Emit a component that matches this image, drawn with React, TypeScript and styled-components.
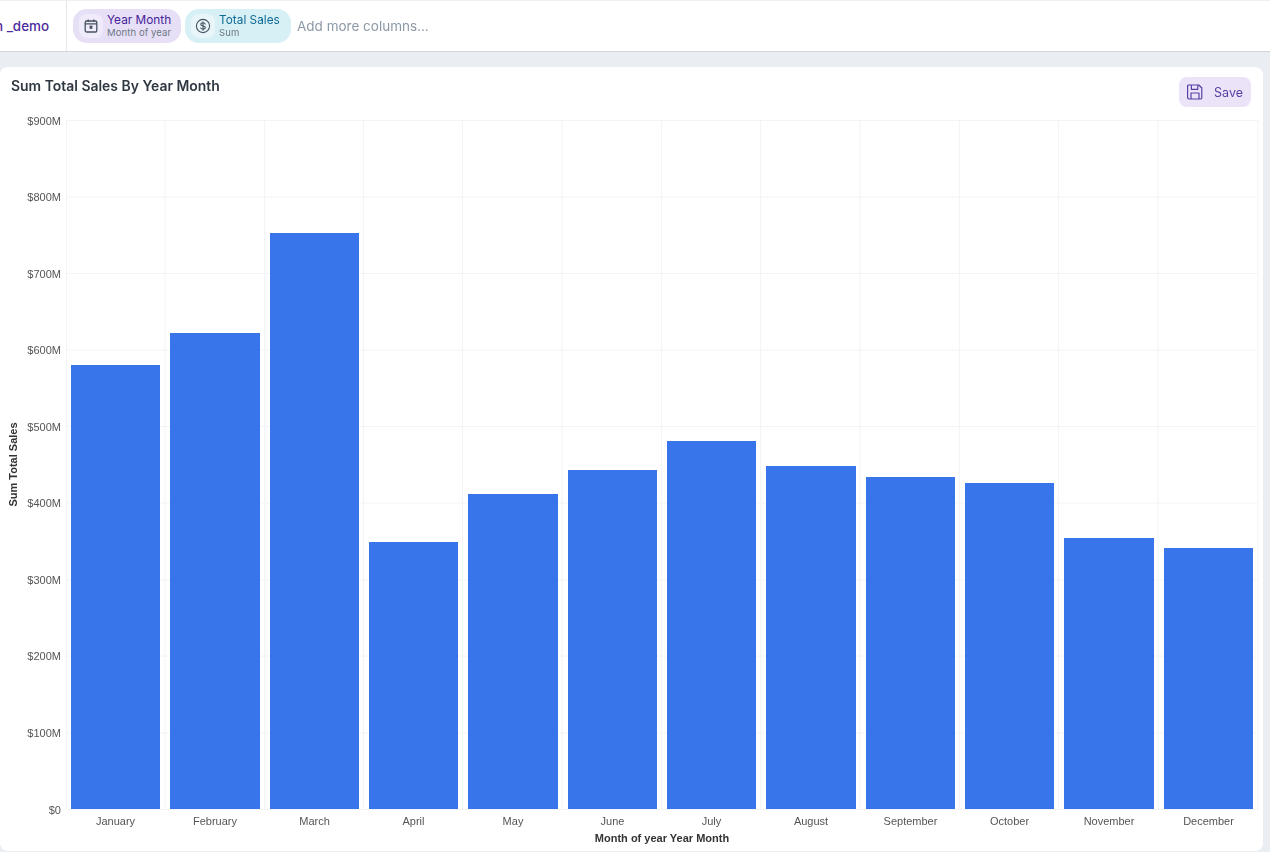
import React from "react";
import styled, { createGlobalStyle } from "styled-components";

const Global = createGlobalStyle`
  html, body { margin: 0; padding: 0; height: 100%; overflow: hidden; }
  body { background: #eaeef2; font-family: Inter, "Noto Sans", sans-serif; }
  #root { height: 852px; }
`;

const Page = styled.div`
  width: 1270px;
  height: 852px;
  display: flex;
  flex-direction: column;
  overflow: hidden;
  will-change: opacity;
`;

const TopBar = styled.header`
  height: 52px;
  flex: none;
  box-sizing: border-box;
  display: flex;
  align-items: center;
  background: #fff;
  border-top: 1px solid #eef1f4;
  border-bottom: 1px solid #d1d6db;
`;

const Source = styled.div`
  width: 67px;
  height: 100%;
  box-sizing: border-box;
  flex: none;
  display: flex;
  align-items: center;
  justify-content: flex-end;
  padding: 0 17px 1px 0;
  overflow: hidden;
  white-space: nowrap;
  border-right: 1px solid #e3e7ea;
  color: #4c2a9e;
  font-size: 13.4px;
  font-weight: 500;
`;

const Columns = styled.div`
  display: flex;
  align-items: center;
  gap: 4px;
  padding-left: 6px;
`;

const Chip = styled.div<{ $tone: "purple" | "cyan"; $w: number }>`
  width: ${(p) => p.$w}px;
  height: 34px;
  box-sizing: border-box;
  padding-left: 6px;
  display: flex;
  align-items: center;
  gap: 4px;
  border-radius: 14px;
  background: ${(p) => (p.$tone === "purple" ? "#e7dff6" : "#d6f0f6")};
`;

const ChipIcon = styled.span<{ $tone: "purple" | "cyan" }>`
  width: 24px;
  height: 24px;
  flex: none;
  display: flex;
  align-items: center;
  justify-content: center;
  border-radius: 8px;
  background: ${(p) => (p.$tone === "purple" ? "#f0ebfa" : "#e8f6fa")};
  color: #46525f;
`;

const ChipText = styled.div`
  display: flex;
  flex-direction: column;
  white-space: nowrap;
`;

const ChipTitle = styled.span<{ $tone: "purple" | "cyan" }>`
  font-size: 11.8px;
  line-height: 14px;
  font-weight: 400;
  letter-spacing: 0.02px;
  color: ${(p) => (p.$tone === "purple" ? "#44229a" : "#0f6a94")};
`;

const ChipSub = styled.span`
  font-size: 9.5px;
  line-height: 12px;
  letter-spacing: 0.1px;
  color: #6d7884;
`;

const Placeholder = styled.span`
  margin: 0 0 1px 2px;
  font-size: 13.5px;
  line-height: 18px;
  color: #8c98a6;
`;

const Card = styled.section`
  margin-top: 15px;
  width: 1263px;
  height: 784px;
  flex: none;
  display: flex;
  flex-direction: column;
  background: #fff;
  border-radius: 8px;
  overflow: hidden;
`;

const CardHeader = styled.div`
  height: 48px;
  flex: none;
  box-sizing: border-box;
  padding: 10px 12px 0 11px;
  display: flex;
  justify-content: space-between;
  align-items: flex-start;
`;

const CardTitle = styled.h2`
  margin: -1px 0 0;
  font-size: 13.95px;
  line-height: 20px;
  font-weight: 600;
  color: #2f3741;
`;

const SaveButton = styled.button`
  width: 72px;
  height: 30px;
  box-sizing: border-box;
  padding: 0 8px;
  border: 0;
  border-radius: 8px;
  background: #ebe4f8;
  color: #5a3ea6;
  display: flex;
  align-items: center;
  justify-content: space-between;
  font-family: inherit;
  font-size: 12.5px;
`;

const Chart = styled.svg`
  display: block;
  flex: none;
  font-family: "Liberation Sans", Arial, sans-serif;
`;

const AxisText = styled.text`
  font-size: 11px;
  fill: #555;
`;

const AxisTitle = styled.text`
  font-size: 11px;
  font-weight: 700;
  fill: #333;
`;

const months: [string, number, number, number][] = [
  ["January", 71, 160, 365],
  ["February", 170, 260, 333],
  ["March", 270, 359, 233],
  ["April", 369, 458, 542],
  ["May", 468, 558, 494],
  ["June", 568, 657, 470],
  ["July", 667, 756, 441],
  ["August", 766, 856, 466],
  ["September", 866, 955, 477],
  ["October", 965, 1054, 483],
  ["November", 1064, 1154, 538],
  ["December", 1164, 1253, 548],
];
const ticks: [string, number][] = [
  ["$900M", 120.5], ["$800M", 197], ["$700M", 273.5], ["$600M", 350], ["$500M", 426.5],
  ["$400M", 503], ["$300M", 580], ["$200M", 656], ["$100M", 733], ["$0", 809.5],
];
const vLines = [66.5, 165, 264.5, 363.5, 462.5, 562, 661.5, 760.5, 860, 959.5, 1058.5, 1158, 1258];
const BASE = 809;

export default function App() {
  return (
    <Page>
      <Global />
      <TopBar>
        <Source>n _demo</Source>
        <Columns>
          <Chip $tone="purple" $w={108}>
            <ChipIcon $tone="purple">
              <svg width="14" height="14" viewBox="0 0 14 14" fill="none" stroke="currentColor" strokeWidth="1.3">
                <rect x="1.2" y="2" width="11.6" height="11" rx="1.6" />
                <path d="M1.2 4.8h11.6M4.2 0.4v2.6M9.8 0.4v2.6" />
                <rect x="5.6" y="6.6" width="2.8" height="3.2" fill="currentColor" stroke="none" />
              </svg>
            </ChipIcon>
            <ChipText>
              <ChipTitle $tone="purple">Year Month</ChipTitle>
              <ChipSub>Month of year</ChipSub>
            </ChipText>
          </Chip>
          <Chip $tone="cyan" $w={106}>
            <ChipIcon $tone="cyan">
              <svg width="16" height="16" viewBox="0 0 16 16" fill="none" stroke="currentColor" strokeWidth="1.1" strokeLinecap="round">
                <circle cx="8" cy="8" r="6.6" />
                <path d="M10.2 6.1c-.3-.8-1.1-1.3-2.2-1.3-1.3 0-2.2.7-2.2 1.6 0 2.2 4.5 1 4.5 3.2 0 .9-1 1.6-2.3 1.6-1.1 0-2-.5-2.3-1.3M8 3.8v8.4" />
              </svg>
            </ChipIcon>
            <ChipText>
              <ChipTitle $tone="cyan">Total Sales</ChipTitle>
              <ChipSub>Sum</ChipSub>
            </ChipText>
          </Chip>
          <Placeholder>Add more columns...</Placeholder>
        </Columns>
      </TopBar>
      <Card>
        <CardHeader>
          <CardTitle>Sum Total Sales By Year Month</CardTitle>
          <SaveButton>
            <svg width="16" height="16" viewBox="0 0 16 16" fill="none" stroke="currentColor" strokeWidth="1.2" strokeLinejoin="round">
              <path d="M1.6 1h10.2l3 3v9.6a1.4 1.4 0 0 1-1.4 1.4H2a1.4 1.4 0 0 1-1.4-1.4V2a1 1 0 0 1 1-1z" />
              <path d="M4.4 1v4.4h6.4V1M4 15V9h8v6" />
            </svg>
            <span>Save</span>
          </SaveButton>
        </CardHeader>
        <Chart width="1263" height="736" viewBox="0 115 1263 736">
          {ticks.map(([label, y]) => (
            <line key={label} x1="66" x2="1258" y1={y} y2={y} stroke="#f3f4f5" />
          ))}
          {vLines.map((x) => (
            <line key={x} x1={x} x2={x} y1="120" y2="809.5" stroke="#f3f4f5" />
          ))}
          {ticks.map(([label, y]) => (
            <AxisText key={label} x="61" y={y + 4} textAnchor="end">{label}</AxisText>
          ))}
          {months.map(([name, x1, x2, top]) => (
            <g key={name}>
              <rect x={x1} y={top} width={x2 - x1} height={BASE - top} fill="#3874ea" />
              <AxisText x={(x1 + x2) / 2} y="825" textAnchor="middle">{name}</AxisText>
            </g>
          ))}
          <AxisTitle x="662" y="842" textAnchor="middle">Month of year Year Month</AxisTitle>
          <AxisTitle x="0" y="0" textAnchor="middle" transform="translate(17 464.5) rotate(-90)">Sum Total Sales</AxisTitle>
        </Chart>
      </Card>
    </Page>
  );
}
